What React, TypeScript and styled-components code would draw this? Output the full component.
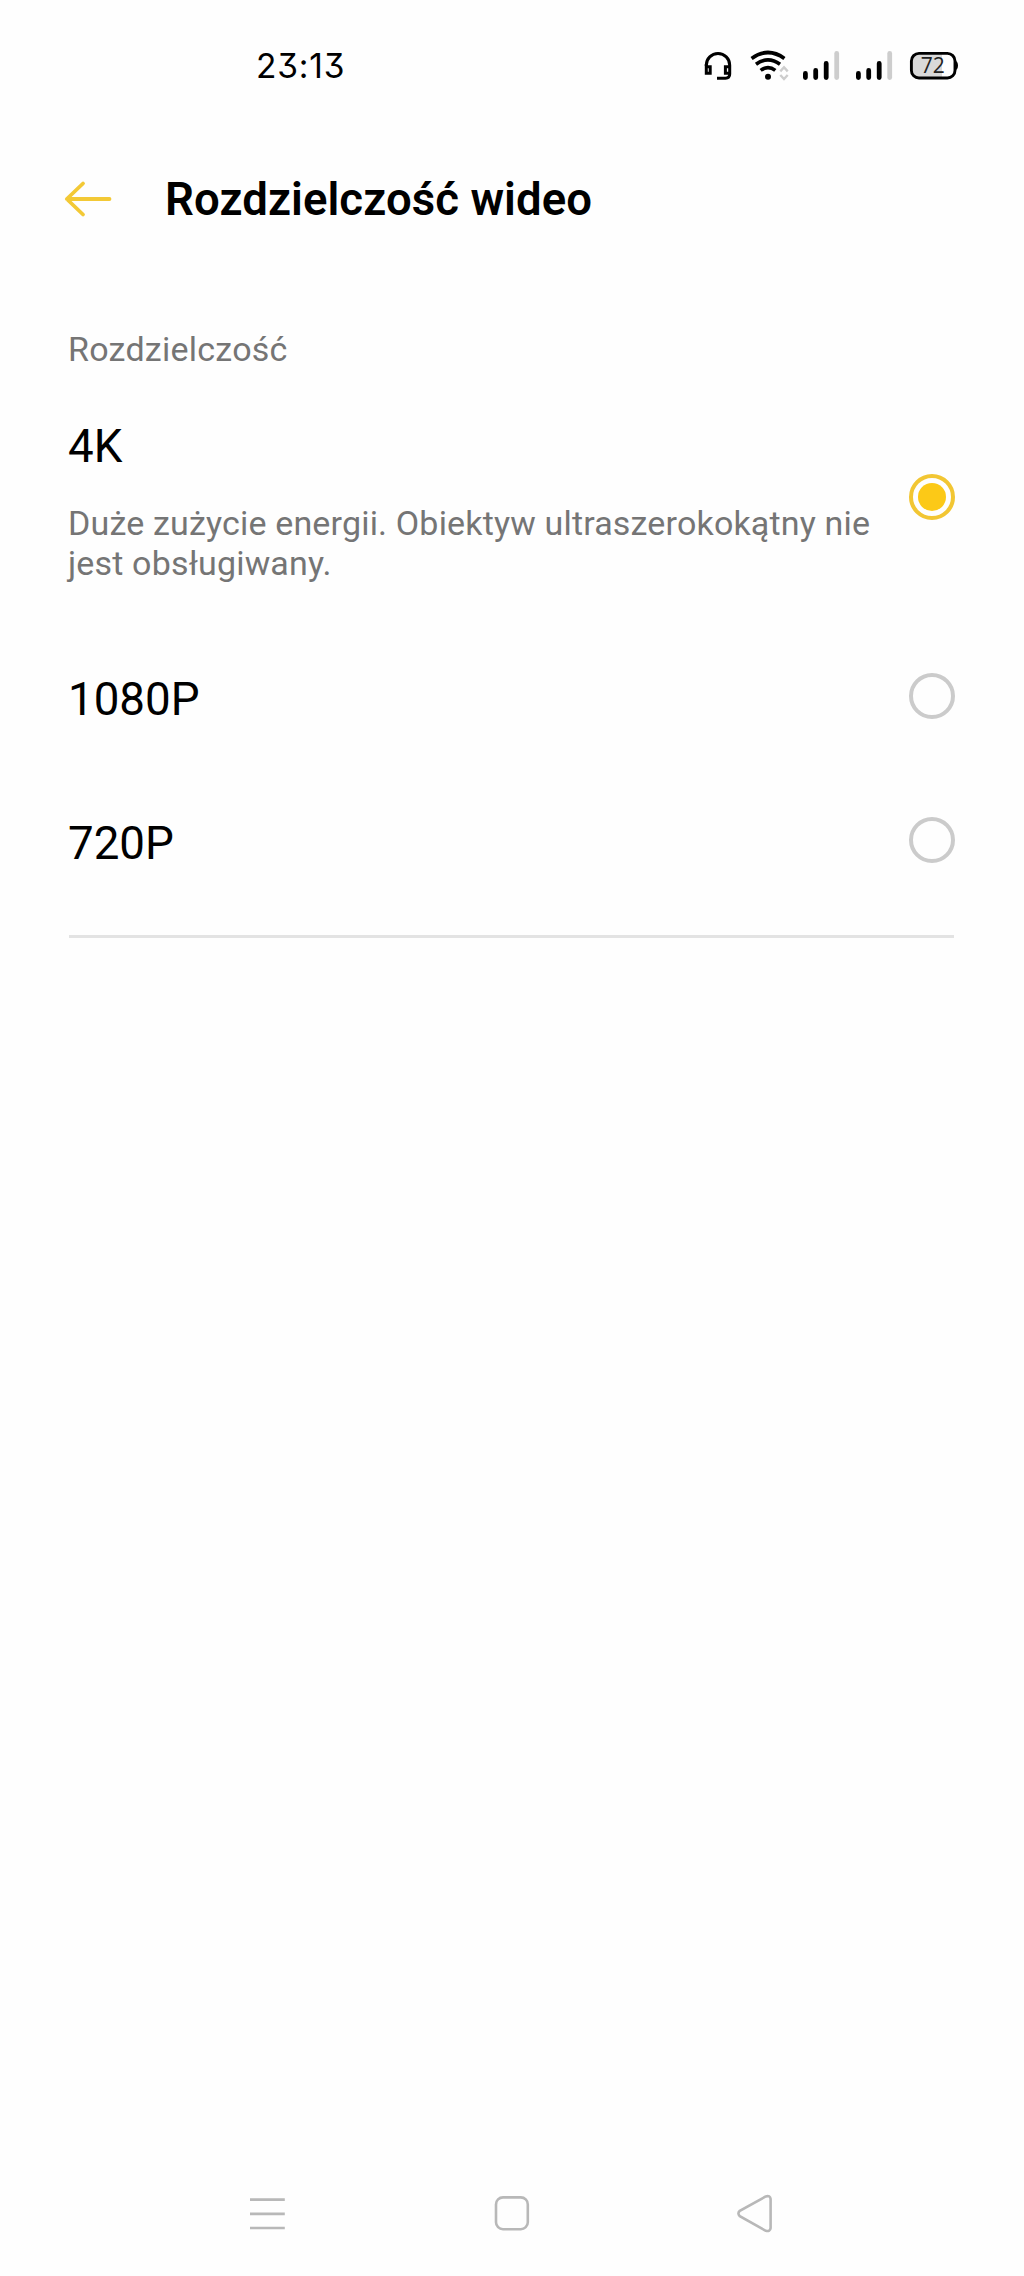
import React, { useState } from "react";
import styled, { createGlobalStyle } from "styled-components";

const GlobalStyle = createGlobalStyle`
  *, *::before, *::after { box-sizing: border-box; }
  body {
    margin: 0;
    background: #fefefe;
    font-family: Roboto, "Liberation Sans", sans-serif;
  }
`;

const Screen = styled.div`
  display: flex;
  flex-direction: column;
  width: 1024px;
  height: 2276px;
  background: #fefefe;
  color: #000;
`;

const StatusBar = styled.div`
  display: flex;
  align-items: center;
  justify-content: space-between;
  height: 132px;
  padding: 0 65px 0 256px;
`;

const Clock = styled.time`
  font-family: Inter, sans-serif;
  font-size: 33.5px;
  line-height: 40px;
  font-feature-settings: "cv09";
  letter-spacing: 0.8px;
`;

const StatusIcons = styled.div`
  display: flex;
  align-items: center;
`;

const Icon = styled.svg<{ $gap?: number }>`
  display: block;
  flex: none;
  margin-left: ${(p) => p.$gap ?? 0}px;
`;

const Header = styled.header`
  display: flex;
  align-items: center;
  height: 134px;
  padding-left: 60px;
`;

const IconButton = styled.button`
  display: flex;
  padding: 0;
  border: 0;
  background: none;
  cursor: pointer;
`;

const Title = styled.h1`
  margin: 1px 0 0 51px;
  font-size: 45.5px;
  line-height: 54px;
  font-weight: 600;
  letter-spacing: 0.08px;
  white-space: nowrap;
`;

const Main = styled.main`
  flex: 1;
  padding: 63px 69px 0 68px;
`;

const SectionLabel = styled.h2`
  margin: 0 0 1px;
  font-size: 34px;
  line-height: 40px;
  font-weight: 400;
  letter-spacing: 0.25px;
  color: #757575;
`;

const Options = styled.div`
  display: flex;
  flex-direction: column;
`;

const Divider = styled.hr`
  height: 3px;
  margin: 23px 1px 0;
  border: 0;
  background: #e3e3e3;
`;

const Option = styled.button<{ $height: number }>`
  display: flex;
  align-items: center;
  justify-content: space-between;
  height: ${(p) => p.$height}px;
  padding: 0;
  border: 0;
  background: none;
  color: inherit;
  font-family: inherit;
  text-align: left;
  cursor: pointer;
`;

const OptionText = styled.span`
  display: flex;
  flex-direction: column;
  gap: 29px;
  width: 820px;
  padding-top: 8px;
`;

const OptionName = styled.span`
  font-size: 45.7px;
  line-height: 54px;
`;

const OptionNote = styled.span`
  font-size: 34px;
  line-height: 40px;
  letter-spacing: 0.17px;
  color: #757575;
`;

const Radio = styled.span<{ $checked: boolean }>`
  display: flex;
  align-items: center;
  justify-content: center;
  flex: none;
  width: 46px;
  height: 46px;
  border: 4px solid ${(p) => (p.$checked ? "#f2c633" : "#cbcbcb")};
  border-radius: 50%;

  &::after {
    content: "";
    display: ${(p) => (p.$checked ? "block" : "none")};
    width: 28px;
    height: 28px;
    border-radius: 50%;
    background: #fcc917;
  }
`;

const NavBar = styled.nav`
  display: flex;
  align-items: center;
  justify-content: space-between;
  height: 124px;
  padding: 0 250px 0 248px;
`;

const SignalIcon = ({ gap }: { gap: number }) => (
  <Icon $gap={gap} width="40" height="32" viewBox="802 50 40 32">
    <g strokeWidth="4.8" strokeLinecap="round" stroke="#000">
      <path d="M806.4 73.4V77.6M816.7 70.4V77.6M827.2 63.4V77.6" />
      <path d="M837.7 53.4V77.6" stroke="#cdcdcd" />
    </g>
  </Icon>
);

const options = [
  {
    name: "4K",
    note: "Duże zużycie energii. Obiektyw ultraszerokokątny nie jest obsługiwany.",
    height: 254,
  },
  { name: "1080P", height: 144 },
  { name: "720P", height: 144 },
];

export default function App() {
  const [selected, setSelected] = useState("4K");

  return (
    <>
      <GlobalStyle />
      <Screen>
        <StatusBar>
          <Clock>23:13</Clock>
          <StatusIcons>
            <Icon width="30" height="32" viewBox="704 50 30 32">
              <g fill="none" stroke="#000" strokeWidth="3">
                <path d="M707.3 66V65.2A11.7 11.7 0 0 1 730.7 65.2V74Q730.7 78.2 726.5 78.2H718" />
                <path d="M707.3 64V73.2H711.2V66.8H707.3M730.7 66.8H726.4V73.2H730.7" />
              </g>
            </Icon>
            <Icon $gap={16} width="40" height="32" viewBox="750 50 40 32">
              <g fill="none" stroke="#000" strokeWidth="3.7">
                <path d="M752.6 58.4Q769 46.6 785.4 58.4" />
                <path d="M757 64.2Q769 55.6 781 64.2" />
                <path d="M761.7 70.4Q769 64.8 776.3 70.4" />
              </g>
              <circle cx="769" cy="76.8" r="3" />
              <path
                d="M781.3 71.4L785 67.3L788.7 71.4M781.3 75L785 79L788.7 75"
                fill="none"
                stroke="#cdcdcd"
                strokeWidth="2.4"
              />
            </Icon>
            <SignalIcon gap={12} />
            <SignalIcon gap={13} />
            <Icon $gap={15} width="50" height="32" viewBox="910 50 50 32">
              <path d="M921 53H943V78H921Q913 78 913 70V61Q913 53 921 53Z" fill="#d9d9d9" />
              <rect x="912.4" y="53.4" width="43.6" height="24.6" rx="7.6" fill="none" stroke="#000" strokeWidth="2.9" />
              <path d="M956 60.6Q959 61.6 959 65.5Q959 69.4 956 70.4Z" />
              <text
                x="933.8"
                y="72.6"
                textAnchor="middle"
                fontFamily="Open Sans, sans-serif"
                fontSize="21"
                fontWeight="400"
                fill="#222"
              >
                72
              </text>
            </Icon>
          </StatusIcons>
        </StatusBar>

        <Header>
          <IconButton aria-label="Wstecz">
            <Icon width="54" height="40" viewBox="60 179 54 40">
              <path
                d="M109.5 199H67M83 183.5L66.8 199L83 214.5"
                fill="none"
                stroke="#f3c936"
                strokeWidth="3.8"
                strokeLinecap="round"
                strokeLinejoin="round"
              />
            </Icon>
          </IconButton>
          <Title>Rozdzielczość wideo</Title>
        </Header>

        <Main>
          <SectionLabel>Rozdzielczość</SectionLabel>
          <Options role="radiogroup">
            {options.map((o) => (
              <Option
                key={o.name}
                role="radio"
                aria-checked={selected === o.name}
                $height={o.height}
                onClick={() => setSelected(o.name)}
              >
                <OptionText>
                  <OptionName>{o.name}</OptionName>
                  {o.note && <OptionNote>{o.note}</OptionNote>}
                </OptionText>
                <Radio $checked={selected === o.name} />
              </Option>
            ))}
          </Options>
          <Divider />
        </Main>

        <NavBar>
          <IconButton aria-label="Ostatnie">
            <Icon width="38" height="44" viewBox="248 2192 38 44">
              <path d="M250 2199.6H284.8M250 2213.8H284.8M250 2228H284.8" stroke="#b8b8b8" strokeWidth="2.7" />
            </Icon>
          </IconButton>
          <IconButton aria-label="Ekran główny">
            <Icon width="38" height="44" viewBox="492 2192 38 44">
              <rect x="496" y="2197.4" width="31.8" height="31.8" rx="7" fill="none" stroke="#b8b8b8" strokeWidth="2.6" />
            </Icon>
          </IconButton>
          <IconButton aria-label="Wróć">
            <Icon width="38" height="44" viewBox="736 2192 38 44">
              <path
                d="M765.8 2196.4L739.8 2210.8Q737 2213.5 739.8 2216.2L765.8 2230.8Q770.2 2231.8 770.6 2228V2199Q770.2 2195.2 765.8 2196.4Z"
                fill="none"
                stroke="#b8b8b8"
                strokeWidth="2.6"
              />
            </Icon>
          </IconButton>
        </NavBar>
      </Screen>
    </>
  );
}
